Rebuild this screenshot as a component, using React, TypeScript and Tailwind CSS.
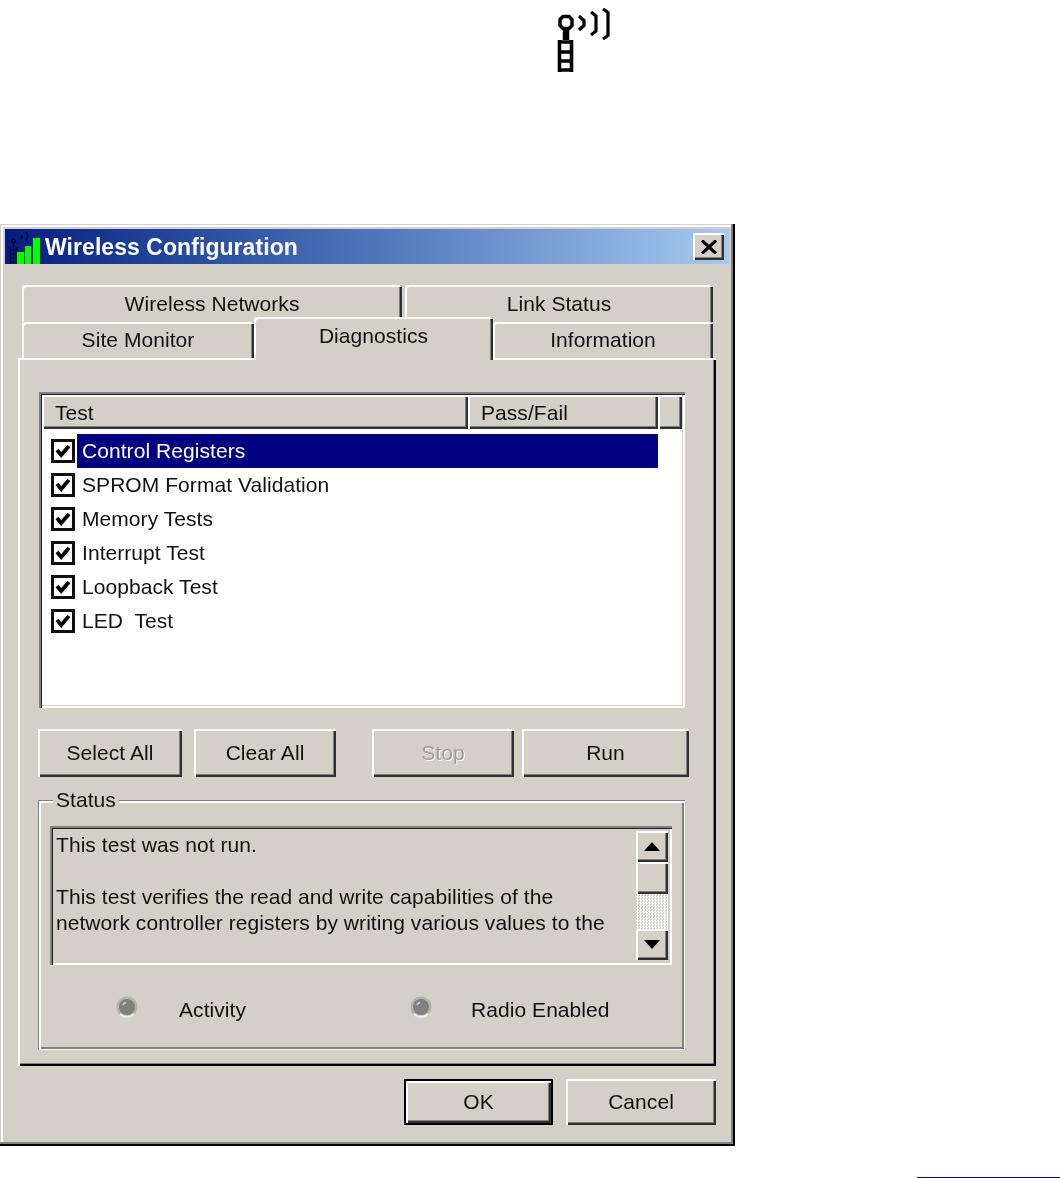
const raised =
  "shadow-[inset_2px_2px_0_#ffffff,inset_-2px_-2px_0_#303030,inset_-3px_-3px_0_#808080]";
const sunken =
  "shadow-[inset_2px_2px_0_#808080,inset_3px_3px_0_#202020,inset_-2px_-2px_0_#ffffff,inset_-3px_-3px_0_#d4d0c8]";

const tests = [
  "Control Registers",
  "SPROM Format Validation",
  "Memory Tests",
  "Interrupt Test",
  "Loopback Test",
  "LED  Test",
];

function TitleBars() {
  return (
    <svg width="32" height="34" viewBox="0 0 32 34" className="shrink-0">
      <g stroke="#06063a" fill="none">
        <circle cx="4.5" cy="11" r="1.8" strokeWidth="1.4" />
        <path d="M4.5 13v4M1.5 17v17M7.5 17v17M1.5 20h6M1.5 24h6M1.5 28h6M1.5 32h6" strokeWidth="1.5" />
      </g>
      <path d="M12 5q2 2 0 4M17 2q3 4 0 9" stroke="#06063a" strokeWidth="1.4" fill="none" />
      <rect x="8" y="22" width="7" height="12" fill="#00ff00" />
      <rect x="16" y="16" width="6" height="18" fill="#00ff00" />
      <rect x="24" y="8" width="7" height="26" fill="#00ff00" />
    </svg>
  );
}

function TowerIcon() {
  return (
    <svg width="58" height="66" viewBox="0 0 58 66" fill="none" stroke="#000" strokeWidth="3.4">
      <path d="M7 8.5h6l3 3v6l-3 3H7l-3-3v-6z" />
      <path d="M10 21v11" strokeWidth="6.5" />
      <path d="M3.5 32v32M15.5 32v32" strokeWidth="3.6" />
      <path d="M3 34h13M3 44h13M3 53h13M3 62h13" />
      <path d="M23 8l5 4.5v5l-5 4.5" strokeWidth="3.2" />
      <path d="M35 4l5 4v15l-5 4" strokeWidth="3.2" />
      <path d="M47 1l5 3.5v23l-5 3.5" strokeWidth="3.2" />
    </svg>
  );
}

function CheckBox() {
  return (
    <div className="w-[24px] h-[24px] border-[3px] border-[#101010] bg-white flex items-center justify-center shrink-0">
      <svg width="16" height="14" viewBox="0 0 16 14">
        <path d="M2 6L6.2 11L14 2" stroke="#000" strokeWidth="3.8" fill="none" />
      </svg>
    </div>
  );
}

function Led() {
  return (
    <svg width="22" height="22" viewBox="0 0 22 22" className="shrink-0">
      <circle cx="11" cy="11" r="10.5" fill="#b4b1aa" />
      <path d="M4 18a10 10 0 0 0 14 0" stroke="#f0eeea" strokeWidth="2" fill="none" />
      <circle cx="11" cy="11" r="8" fill="#808080" />
      <path d="M7 9q1-2 3-2.5" stroke="#dcdcdc" strokeWidth="1.5" fill="none" />
    </svg>
  );
}

function Tab({ label, className }: { label: string; className: string }) {
  return (
    <div
      className={`flex justify-center rounded-t-[3px] shadow-[inset_2px_2px_0_#ffffff,inset_-2px_0_0_#303030,inset_-3px_0_0_#808080] bg-[#d4d0c8] ${className}`}
    >
      {label}
    </div>
  );
}

function Button({
  label,
  className,
  disabled,
}: {
  label: string;
  className: string;
  disabled?: boolean;
}) {
  return (
    <div
      className={`h-[48px] flex items-center justify-center ${raised} ${className} ${
        disabled ? "text-[#a09c94] [text-shadow:1px_1px_0_#ffffff]" : ""
      }`}
    >
      {label}
    </div>
  );
}

function ScrollButton({ up }: { up?: boolean }) {
  return (
    <div className={`h-[31px] flex items-center justify-center ${raised}`}>
      <svg width="16" height="9" viewBox="0 0 16 9">
        <path d={up ? "M8 0L16 9H0Z" : "M0 0H16L8 9Z"} fill="#000" />
      </svg>
    </div>
  );
}

export default function App() {
  return (
    <div className="w-[1060px] h-[1178px] overflow-hidden bg-white text-[#111] font-['Liberation_Sans',sans-serif] text-[21px] tracking-[0.06px] leading-[26px] blur-[0.4px]">
      <div className="h-[224px] pl-[556px] pt-[8px]">
        <TowerIcon />
      </div>

      <div className="w-[735px] h-[922px] p-[5px] bg-[#d4d0c8] shadow-[inset_-2px_-2px_0_#000000,inset_-4px_-4px_0_#808080,inset_1px_1px_0_#d4d0c8,inset_3px_3px_0_#ffffff]">
        <div className="h-[35px] w-[724px] flex items-center bg-gradient-to-r from-[#081a80] to-[#a6caf0]">
          <div className="ml-[4px] mr-[4px]">
            <TitleBars />
          </div>
          <span className="font-bold text-white text-[23px]">Wireless Configuration</span>
          <div className={`ml-auto mr-[5px] w-[31px] h-[27px] flex items-center justify-center bg-[#d4d0c8] ${raised}`}>
            <svg width="16" height="14" viewBox="0 0 16 14">
              <path d="M1 0.5L15 13.5M15 0.5L1 13.5" stroke="#000" strokeWidth="3.2" />
            </svg>
          </div>
        </div>

        {/* tab rows */}
        <div className="ml-[17px] mt-[21px] flex gap-[3px]">
          <Tab label="Wireless Networks" className="w-[380px] h-[37px] pt-[6px]" />
          <Tab label="Link Status" className="w-[308px] h-[37px] pt-[6px]" />
        </div>
        <div className="ml-[17px] flex items-start h-[36px]">
          <Tab label="Site Monitor" className="w-[232px] h-[36px] pt-[5px]" />
          <Tab label="Diagnostics" className="relative z-10 w-[239px] h-[43px] -mt-[5px] pt-[6px]" />
          <Tab label="Information" className="w-[220px] h-[36px] pt-[5px]" />
        </div>

        {/* panel */}
        <div className="ml-[13px] w-[698px] h-[708px] pt-[34px] pl-[21px] shadow-[inset_2px_2px_0_#ffffff,inset_-2px_-2px_0_#000000,inset_-3px_-3px_0_#808080]">
          <div className={`w-[646px] h-[316px] p-[3px] bg-white ${sunken}`}>
            <div className="flex h-[34px] bg-[#d4d0c8]">
              <div className={`w-[426px] pl-[13px] pt-[5px] ${raised}`}>Test</div>
              <div className={`w-[190px] pl-[13px] pt-[5px] ${raised}`}>Pass/Fail</div>
              <div className={`flex-1 ${raised}`} />
            </div>
            <div className="pt-[5px]">
              {tests.map((test, i) => (
                <div key={test} className="flex items-center h-[34px] pl-[9px]">
                  <CheckBox />
                  <div
                    className={`ml-[2px] w-[581px] h-[34px] pl-[5px] flex items-center whitespace-pre ${
                      i === 0 ? "bg-[#000080] text-white" : ""
                    }`}
                  >
                    {test}
                  </div>
                </div>
              ))}
            </div>
          </div>

          <div className="flex mt-[21px] -ml-[1px]">
            <Button label="Select All" className="w-[144px]" />
            <Button label="Clear All" className="w-[142px] ml-[12px]" />
            <Button label="Stop" className="w-[142px] ml-[36px]" disabled />
            <Button label="Run" className="w-[167px] ml-[8px]" />
          </div>

          {/* status group */}
          <div className="relative -ml-[1px] mt-[23px] w-[647px] h-[250px] pt-[26px] pl-[12px] shadow-[inset_1px_1px_0_#808080,inset_-1px_-1px_0_#ffffff,inset_3px_3px_0_#ffffff,inset_-3px_-3px_0_#808080]">
            <span className="absolute left-[15px] -top-[13px] px-[3px] bg-[#d4d0c8]">Status</span>
            <div className={`w-[622px] h-[139px] flex p-[5px] ${sunken}`}>
              <div className="flex-1 min-w-0 pl-[1px] pt-[1px] whitespace-pre">
                <div>This test was not run.</div>
                <div>&nbsp;</div>
                <div>This test verifies the read and write capabilities of the</div>
                <div>network controller registers by writing various values to the</div>
              </div>
              <div className="w-[32px] mr-[-1px] shrink-0">
                <ScrollButton up />
                <div className={`h-[32px] ${raised}`} />
                <div className="h-[35px] bg-[repeating-conic-gradient(#ffffff_0_25%,#d4d0c8_0_50%)] bg-[length:3px_3px]" />
                <ScrollButton />
              </div>
            </div>
            <div className="flex items-center mt-[29px] pl-[66px] h-[26px]">
              <Led />
              <span className="ml-[41px] mt-[6px] w-[70px]">Activity</span>
              <div className="ml-[161px]">
                <Led />
              </div>
              <span className="ml-[39px] mt-[6px]">Radio Enabled</span>
            </div>
          </div>
        </div>

        {/* dialog buttons */}
        <div className="flex mt-[13px] ml-[399px]">
          <div className="w-[149px] h-[46px] p-[2px] bg-black flex">
            <div className={`flex-1 flex items-center justify-center bg-[#d4d0c8] ${raised}`}>OK</div>
          </div>
          <Button label="Cancel" className="w-[150px] !h-[46px] ml-[13px]" />
        </div>
      </div>

      <div className="ml-[917px] mt-[31px] h-[1px] bg-[#0000d0]" />
    </div>
  );
}
